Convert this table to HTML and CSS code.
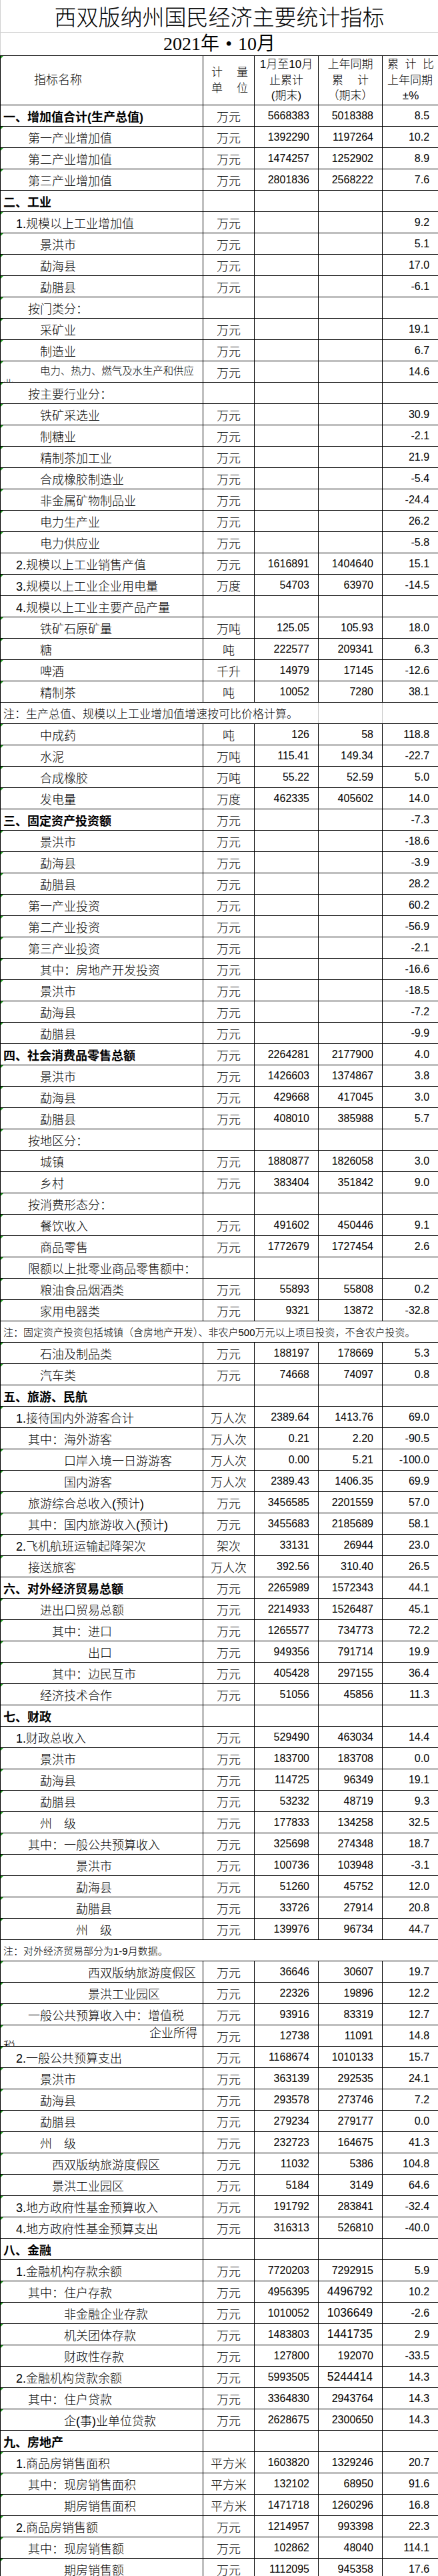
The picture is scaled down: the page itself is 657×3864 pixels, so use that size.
FILE: index.html
```html
<!DOCTYPE html>
<html lang="zh-CN">
<head>
<meta charset="utf-8">
<title>西双版纳州国民经济主要统计指标</title>
<link rel="stylesheet" href="styles.css">
</head>
<body>
<table class="sheet">
<colgroup><col class="c1"><col class="c2"><col class="c3"><col class="c4"><col class="c5"></colgroup>
<tbody>
<tr class="t1"><td class="title" colspan="5">西双版纳州国民经济主要统计指标</td></tr>
<tr class="t2"><td class="sub" colspan="5">2021年<span class="dot">•</span>10月</td></tr>
<tr class="hd">
<td class="n g h1">指标名称</td>
<td class="h2"><div class="sp2"><span>计</span><span>量</span></div><div class="sp2"><span>单</span><span>位</span></div></td>
<td class="h3"><div>1月至10月</div><div>止累计</div><div>(期末)</div></td>
<td class="h3"><div>上年同期</div><div class="sp4"><span>累</span><span>计</span></div><div>（期末）</div></td>
<td class="h5"><div class="sp5"><span>累</span><span>计</span><span>比</span></div><div>上年同期</div><div class="pm">±%</div></td>
</tr>

<tr><td class="n b">一、增加值合计(生产总值)</td><td class="u">万元</td><td class="v">5668383</td><td class="v">5018388</td><td class="v">8.5</td></tr>
<tr><td class="n g i2">第一产业增加值</td><td class="u">万元</td><td class="v">1392290</td><td class="v">1197264</td><td class="v">10.2</td></tr>
<tr><td class="n g i2">第二产业增加值</td><td class="u">万元</td><td class="v">1474257</td><td class="v">1252902</td><td class="v">8.9</td></tr>
<tr><td class="n g i2">第三产业增加值</td><td class="u">万元</td><td class="v">2801836</td><td class="v">2568222</td><td class="v">7.6</td></tr>
<tr><td class="n b">二、工业</td><td class="u"></td><td class="v"></td><td class="v"></td><td class="v"></td></tr>
<tr><td class="n g i1">1.规模以上工业增加值</td><td class="u">万元</td><td class="v"></td><td class="v"></td><td class="v">9.2</td></tr>
<tr><td class="n g i3">景洪市</td><td class="u">万元</td><td class="v"></td><td class="v"></td><td class="v">5.1</td></tr>
<tr><td class="n g i3">勐海县</td><td class="u">万元</td><td class="v"></td><td class="v"></td><td class="v">17.0</td></tr>
<tr><td class="n g i3">勐腊县</td><td class="u">万元</td><td class="v"></td><td class="v"></td><td class="v">-6.1</td></tr>
<tr><td class="n g i2">按门类分：</td><td class="u"></td><td class="v"></td><td class="v"></td><td class="v"></td></tr>
<tr><td class="n g i3">采矿业</td><td class="u">万元</td><td class="v"></td><td class="v"></td><td class="v">19.1</td></tr>
<tr><td class="n g i3">制造业</td><td class="u">万元</td><td class="v"></td><td class="v"></td><td class="v">6.7</td></tr>
<tr><td class="n g wrapc"><div class="wrap1">电力、热力、燃气及水生产和供应业</div></td><td class="u">万元</td><td class="v"></td><td class="v"></td><td class="v">14.6</td></tr>
<tr><td class="n g i2">按主要行业分：</td><td class="u"></td><td class="v"></td><td class="v"></td><td class="v"></td></tr>
<tr><td class="n g i3">铁矿采选业</td><td class="u">万元</td><td class="v"></td><td class="v"></td><td class="v">30.9</td></tr>
<tr><td class="n g i3">制糖业</td><td class="u">万元</td><td class="v"></td><td class="v"></td><td class="v">-2.1</td></tr>
<tr><td class="n g i3">精制茶加工业</td><td class="u">万元</td><td class="v"></td><td class="v"></td><td class="v">21.9</td></tr>
<tr><td class="n g i3">合成橡胶制造业</td><td class="u">万元</td><td class="v"></td><td class="v"></td><td class="v">-5.4</td></tr>
<tr><td class="n g i3">非金属矿物制品业</td><td class="u">万元</td><td class="v"></td><td class="v"></td><td class="v">-24.4</td></tr>
<tr><td class="n g i3">电力生产业</td><td class="u">万元</td><td class="v"></td><td class="v"></td><td class="v">26.2</td></tr>
<tr><td class="n g i3">电力供应业</td><td class="u">万元</td><td class="v"></td><td class="v"></td><td class="v">-5.8</td></tr>
<tr><td class="n i1">2.规模以上工业销售产值</td><td class="u">万元</td><td class="v">1616891</td><td class="v">1404640</td><td class="v">15.1</td></tr>
<tr><td class="n g i1">3.规模以上工业企业用电量</td><td class="u">万度</td><td class="v">54703</td><td class="v">63970</td><td class="v">-14.5</td></tr>
<tr><td class="n i1">4.规模以上工业主要产品产量</td><td class="u"></td><td class="v"></td><td class="v"></td><td class="v"></td></tr>
<tr><td class="n g i3">铁矿石原矿量</td><td class="u">万吨</td><td class="v">125.05</td><td class="v">105.93</td><td class="v">18.0</td></tr>
<tr><td class="n g i3">糖</td><td class="u">吨</td><td class="v">222577</td><td class="v">209341</td><td class="v">6.3</td></tr>
<tr><td class="n g i3">啤酒</td><td class="u">千升</td><td class="v">14979</td><td class="v">17145</td><td class="v">-12.6</td></tr>
<tr><td class="n g i3">精制茶</td><td class="u">吨</td><td class="v">10052</td><td class="v">7280</td><td class="v">38.1</td></tr>
<tr><td class="note note1" colspan="3">注：生产总值、规模以上工业增加值增速按可比价格计算。</td><td class="lg"></td><td class="lgl"></td></tr>
<tr><td class="n g i3">中成药</td><td class="u">吨</td><td class="v">126</td><td class="v">58</td><td class="v">118.8</td></tr>
<tr><td class="n g i3">水泥</td><td class="u">万吨</td><td class="v">115.41</td><td class="v">149.34</td><td class="v">-22.7</td></tr>
<tr><td class="n g i3">合成橡胶</td><td class="u">万吨</td><td class="v">55.22</td><td class="v">52.59</td><td class="v">5.0</td></tr>
<tr><td class="n g i3">发电量</td><td class="u">万度</td><td class="v">462335</td><td class="v">405602</td><td class="v">14.0</td></tr>
<tr><td class="n b">三、固定资产投资额</td><td class="u">万元</td><td class="v"></td><td class="v"></td><td class="v">-7.3</td></tr>
<tr><td class="n g i3">景洪市</td><td class="u">万元</td><td class="v"></td><td class="v"></td><td class="v">-18.6</td></tr>
<tr><td class="n g i3">勐海县</td><td class="u">万元</td><td class="v"></td><td class="v"></td><td class="v">-3.9</td></tr>
<tr><td class="n g i3">勐腊县</td><td class="u">万元</td><td class="v"></td><td class="v"></td><td class="v">28.2</td></tr>
<tr><td class="n g i2">第一产业投资</td><td class="u">万元</td><td class="v"></td><td class="v"></td><td class="v">60.2</td></tr>
<tr><td class="n g i2">第二产业投资</td><td class="u">万元</td><td class="v"></td><td class="v"></td><td class="v">-56.9</td></tr>
<tr><td class="n g i2">第三产业投资</td><td class="u">万元</td><td class="v"></td><td class="v"></td><td class="v">-2.1</td></tr>
<tr><td class="n g i3">其中：房地产开发投资</td><td class="u">万元</td><td class="v"></td><td class="v"></td><td class="v">-16.6</td></tr>
<tr><td class="n g i3">景洪市</td><td class="u">万元</td><td class="v"></td><td class="v"></td><td class="v">-18.5</td></tr>
<tr><td class="n g i3">勐海县</td><td class="u">万元</td><td class="v"></td><td class="v"></td><td class="v">-7.2</td></tr>
<tr><td class="n g i3">勐腊县</td><td class="u">万元</td><td class="v"></td><td class="v"></td><td class="v">-9.9</td></tr>
<tr><td class="n b">四、社会消费品零售总额</td><td class="u">万元</td><td class="v">2264281</td><td class="v">2177900</td><td class="v">4.0</td></tr>
<tr><td class="n g i3">景洪市</td><td class="u">万元</td><td class="v">1426603</td><td class="v">1374867</td><td class="v">3.8</td></tr>
<tr><td class="n g i3">勐海县</td><td class="u">万元</td><td class="v">429668</td><td class="v">417045</td><td class="v">3.0</td></tr>
<tr><td class="n g i3">勐腊县</td><td class="u">万元</td><td class="v">408010</td><td class="v">385988</td><td class="v">5.7</td></tr>
<tr><td class="n g i2">按地区分：</td><td class="u"></td><td class="v"></td><td class="v"></td><td class="v"></td></tr>
<tr><td class="n i3">城镇</td><td class="u">万元</td><td class="v">1880877</td><td class="v">1826058</td><td class="v">3.0</td></tr>
<tr><td class="n i3">乡村</td><td class="u">万元</td><td class="v">383404</td><td class="v">351842</td><td class="v">9.0</td></tr>
<tr><td class="n g i2">按消费形态分：</td><td class="u"></td><td class="v"></td><td class="v"></td><td class="v"></td></tr>
<tr><td class="n g i3">餐饮收入</td><td class="u">万元</td><td class="v">491602</td><td class="v">450446</td><td class="v">9.1</td></tr>
<tr><td class="n g i3">商品零售</td><td class="u">万元</td><td class="v">1772679</td><td class="v">1727454</td><td class="v">2.6</td></tr>
<tr><td class="n g i2">限额以上批零业商品零售额中：</td><td class="u"></td><td class="v"></td><td class="v"></td><td class="v"></td></tr>
<tr><td class="n g i3">粮油食品烟酒类</td><td class="u">万元</td><td class="v">55893</td><td class="v">55808</td><td class="v">0.2</td></tr>
<tr><td class="n g i3">家用电器类</td><td class="u">万元</td><td class="v">9321</td><td class="v">13872</td><td class="v">-32.8</td></tr>
<tr><td class="note note2" colspan="5">注：固定资产投资包括城镇（含房地产开发）、非农户500万元以上项目投资，不含农户投资。</td></tr>
<tr><td class="n g i3">石油及制品类</td><td class="u">万元</td><td class="v">188197</td><td class="v">178669</td><td class="v">5.3</td></tr>
<tr><td class="n g i3">汽车类</td><td class="u">万元</td><td class="v">74668</td><td class="v">74097</td><td class="v">0.8</td></tr>
<tr><td class="n b">五、旅游、民航</td><td class="u"></td><td class="v"></td><td class="v"></td><td class="v"></td></tr>
<tr><td class="n g i1">1.接待国内外游客合计</td><td class="u">万人次</td><td class="v">2389.64</td><td class="v">1413.76</td><td class="v">69.0</td></tr>
<tr><td class="n i2">其中：海外游客</td><td class="u">万人次</td><td class="v">0.21</td><td class="v">2.20</td><td class="v">-90.5</td></tr>
<tr><td class="n g i5">口岸入境一日游游客</td><td class="u">万人次</td><td class="v">0.00</td><td class="v">5.21</td><td class="v">-100.0</td></tr>
<tr><td class="n g i5">国内游客</td><td class="u">万人次</td><td class="v">2389.43</td><td class="v">1406.35</td><td class="v">69.9</td></tr>
<tr><td class="n g i2">旅游综合总收入(预计)</td><td class="u">万元</td><td class="v">3456585</td><td class="v">2201559</td><td class="v">57.0</td></tr>
<tr><td class="n g i2">其中：国内旅游收入(预计)</td><td class="u">万元</td><td class="v">3455683</td><td class="v">2185689</td><td class="v">58.1</td></tr>
<tr><td class="n g i1">2.飞机航班运输起降架次</td><td class="u">架次</td><td class="v">33131</td><td class="v">26944</td><td class="v">23.0</td></tr>
<tr><td class="n g i2">接送旅客</td><td class="u">万人次</td><td class="v">392.56</td><td class="v">310.40</td><td class="v">26.5</td></tr>
<tr><td class="n b">六、对外经济贸易总额</td><td class="u">万元</td><td class="v">2265989</td><td class="v">1572343</td><td class="v">44.1</td></tr>
<tr><td class="n g i3">进出口贸易总额</td><td class="u">万元</td><td class="v">2214933</td><td class="v">1526487</td><td class="v">45.1</td></tr>
<tr><td class="n g i4">其中：进口</td><td class="u">万元</td><td class="v">1265577</td><td class="v">734773</td><td class="v">72.2</td></tr>
<tr><td class="n g i7">出口</td><td class="u">万元</td><td class="v">949356</td><td class="v">791714</td><td class="v">19.9</td></tr>
<tr><td class="n g i4">其中：边民互市</td><td class="u">万元</td><td class="v">405428</td><td class="v">297155</td><td class="v">36.4</td></tr>
<tr><td class="n g i3">经济技术合作</td><td class="u">万元</td><td class="v">51056</td><td class="v">45856</td><td class="v">11.3</td></tr>
<tr><td class="n b">七、财政</td><td class="u"></td><td class="v"></td><td class="v"></td><td class="v"></td></tr>
<tr><td class="n i1">1.财政总收入</td><td class="u">万元</td><td class="v">529490</td><td class="v">463034</td><td class="v">14.4</td></tr>
<tr><td class="n g i3">景洪市</td><td class="u">万元</td><td class="v">183700</td><td class="v">183708</td><td class="v">0.0</td></tr>
<tr><td class="n g i3">勐海县</td><td class="u">万元</td><td class="v">114725</td><td class="v">96349</td><td class="v">19.1</td></tr>
<tr><td class="n g i3">勐腊县</td><td class="u">万元</td><td class="v">53232</td><td class="v">48719</td><td class="v">9.3</td></tr>
<tr><td class="n g i3">州　级</td><td class="u">万元</td><td class="v">177833</td><td class="v">134258</td><td class="v">32.5</td></tr>
<tr><td class="n g i2">其中：一般公共预算收入</td><td class="u">万元</td><td class="v">325698</td><td class="v">274348</td><td class="v">18.7</td></tr>
<tr><td class="n g i6">景洪市</td><td class="u">万元</td><td class="v">100736</td><td class="v">103948</td><td class="v">-3.1</td></tr>
<tr><td class="n g i6">勐海县</td><td class="u">万元</td><td class="v">51260</td><td class="v">45752</td><td class="v">12.0</td></tr>
<tr><td class="n g i6">勐腊县</td><td class="u">万元</td><td class="v">33726</td><td class="v">27914</td><td class="v">20.8</td></tr>
<tr><td class="n g i6">州　级</td><td class="u">万元</td><td class="v">139976</td><td class="v">96734</td><td class="v">44.7</td></tr>
<tr><td class="note note3" colspan="5">注：对外经济贸易部分为1-9月数据。</td></tr>
<tr><td class="n g i7">西双版纳旅游度假区</td><td class="u">万元</td><td class="v">36646</td><td class="v">30607</td><td class="v">19.7</td></tr>
<tr><td class="n g i7">景洪工业园区</td><td class="u">万元</td><td class="v">22326</td><td class="v">19896</td><td class="v">12.2</td></tr>
<tr><td class="n g i2">一般公共预算收入中：增值税</td><td class="u">万元</td><td class="v">93916</td><td class="v">83319</td><td class="v">12.7</td></tr>
<tr><td class="n g wrapc"><div class="wrap2"><div class="r">企业所得</div><div>税</div></div></td><td class="u">万元</td><td class="v">12738</td><td class="v">11091</td><td class="v">14.8</td></tr>
<tr><td class="n g i1">2.一般公共预算支出</td><td class="u">万元</td><td class="v">1168674</td><td class="v">1010133</td><td class="v">15.7</td></tr>
<tr><td class="n g i3">景洪市</td><td class="u">万元</td><td class="v">363139</td><td class="v">292535</td><td class="v">24.1</td></tr>
<tr><td class="n g i3">勐海县</td><td class="u">万元</td><td class="v">293578</td><td class="v">273746</td><td class="v">7.2</td></tr>
<tr><td class="n g i3">勐腊县</td><td class="u">万元</td><td class="v">279234</td><td class="v">279177</td><td class="v">0.0</td></tr>
<tr><td class="n g i3">州　级</td><td class="u">万元</td><td class="v">232723</td><td class="v">164675</td><td class="v">41.3</td></tr>
<tr><td class="n g i4">西双版纳旅游度假区</td><td class="u">万元</td><td class="v">11032</td><td class="v">5386</td><td class="v">104.8</td></tr>
<tr><td class="n g i4">景洪工业园区</td><td class="u">万元</td><td class="v">5184</td><td class="v">3149</td><td class="v">64.6</td></tr>
<tr><td class="n g i1">3.地方政府性基金预算收入</td><td class="u">万元</td><td class="v">191792</td><td class="v">283841</td><td class="v">-32.4</td></tr>
<tr><td class="n g i1">4.地方政府性基金预算支出</td><td class="u">万元</td><td class="v">316313</td><td class="v">526810</td><td class="v">-40.0</td></tr>
<tr><td class="n b">八、金融</td><td class="u"></td><td class="v"></td><td class="v"></td><td class="v"></td></tr>
<tr><td class="n i1">1.金融机构存款余额</td><td class="u">万元</td><td class="v">7720203</td><td class="v">7292915</td><td class="v">5.9</td></tr>
<tr><td class="n g i2">其中：住户存款</td><td class="u">万元</td><td class="v">4956395</td><td class="v w">4496792</td><td class="v">10.2</td></tr>
<tr><td class="n g i5">非金融企业存款</td><td class="u">万元</td><td class="v">1010052</td><td class="v w">1036649</td><td class="v">-2.6</td></tr>
<tr><td class="n g i5">机关团体存款</td><td class="u">万元</td><td class="v">1483803</td><td class="v w">1441735</td><td class="v">2.9</td></tr>
<tr><td class="n g i5">财政性存款</td><td class="u">万元</td><td class="v">127800</td><td class="v">192070</td><td class="v">-33.5</td></tr>
<tr><td class="n i1">2.金融机构贷款余额</td><td class="u">万元</td><td class="v">5993505</td><td class="v w">5244414</td><td class="v">14.3</td></tr>
<tr><td class="n g i2">其中：住户贷款</td><td class="u">万元</td><td class="v">3364830</td><td class="v">2943764</td><td class="v">14.3</td></tr>
<tr><td class="n g i5">企(事)业单位贷款</td><td class="u">万元</td><td class="v">2628675</td><td class="v">2300650</td><td class="v">14.3</td></tr>
<tr><td class="n b">九、房地产</td><td class="u"></td><td class="v"></td><td class="v"></td><td class="v"></td></tr>
<tr><td class="n g i1">1.商品房销售面积</td><td class="u">平方米</td><td class="v">1603820</td><td class="v">1329246</td><td class="v">20.7</td></tr>
<tr><td class="n g i2">其中：现房销售面积</td><td class="u">平方米</td><td class="v">132102</td><td class="v">68950</td><td class="v">91.6</td></tr>
<tr><td class="n g i5">期房销售面积</td><td class="u">平方米</td><td class="v">1471718</td><td class="v">1260296</td><td class="v">16.8</td></tr>
<tr><td class="n g i1">2.商品房销售额</td><td class="u">万元</td><td class="v">1214957</td><td class="v">993398</td><td class="v">22.3</td></tr>
<tr><td class="n g i2">其中：现房销售额</td><td class="u">万元</td><td class="v">102862</td><td class="v">48040</td><td class="v">114.1</td></tr>
<tr><td class="n g i5">期房销售额</td><td class="u">万元</td><td class="v">1112095</td><td class="v">945358</td><td class="v">17.6</td></tr>
</tbody>
</table>
</body>
</html>
```

FILE: styles.css
```css
html, body {
  margin: 0;
  padding: 0;
  background: #ffffff;
  color: #000000;
}

body {
  font-family: "Liberation Sans", "Noto Sans CJK SC", sans-serif;
}

.sheet {
  width: 657px;
  border-collapse: collapse;
  table-layout: fixed;
}

.c1 { width: 304px; }
.c2 { width: 77px; }
.c3 { width: 96px; }
.c4 { width: 96px; }
.c5 { width: 84px; }

.sheet tr { height: 32px; }

.sheet td {
  padding: 0;
  border: 1px solid #000;
  white-space: nowrap;
  overflow: hidden;
  vertical-align: middle;
}

/* title rows */
.sheet tr.t1 { height: 43px; }
.sheet tr.t2 { height: 35px; }

.sheet td.title {
  border-top: none;
  border-left: 1px solid #d0d0d0;
  border-right: 1px solid #d0d0d0;
  border-bottom: 1px solid #d0d0d0;
  text-align: center;
  font-family: "Noto Sans CJK SC", sans-serif;
  font-size: 33px;
  font-weight: 300;
  letter-spacing: 0;
}

.sheet td.sub {
  border-left: 1px solid #d0d0d0;
  border-right: 1px solid #d0d0d0;
  border-top: 1px solid #d0d0d0;
  text-align: center;
  font-family: "Liberation Serif", "Noto Sans CJK SC", serif;
  font-size: 28px;
  line-height: 30px;
}

.dot {
  display: inline-block;
  width: 1em;
  text-align: center;
}

/* header */
.sheet tr.hd { height: 74px; }

.hd td {
  white-space: normal;
  font-family: "Liberation Sans", "Noto Sans CJK SC", sans-serif;
  font-size: 17px;
  font-weight: 300;
  line-height: 23.5px;
}

.hd td.h1 {
  padding-left: 50px;
  font-size: 18px;
}

.hd td.h2 {
  padding: 0 9px 0 12px;
}

.sp2 {
  display: flex;
  justify-content: space-between;
}

.hd td.h3 { text-align: center; }

.sp4 {
  display: flex;
  justify-content: center;
  gap: 21px;
}

.hd td.h5 { padding: 0 6px 0 7px; }

.sp5 {
  display: flex;
  justify-content: space-between;
}

.pm { text-align: center; }

/* body cells */
td.n {
  position: relative;
  font-size: 18px;
  font-weight: 300;
  text-align: left;
}

td.g::before {
  content: "";
  position: absolute;
  top: 0;
  left: 0;
  width: 0;
  height: 0;
  border-top: 4px solid #1f9b1f;
  border-right: 4px solid transparent;
}

td.b {
  padding-left: 4px;
  font-weight: 700;
}

td.i1 { padding-left: 23px; }
td.i2 { padding-left: 41px; }
td.i3 { padding-left: 59px; }
td.i4 { padding-left: 77px; }
td.i5 { padding-left: 95px; }
td.i6 { padding-left: 113px; }
td.i7 { padding-left: 131px; }

td.u {
  text-align: center;
  font-size: 18px;
  font-weight: 300;
}

td.v {
  text-align: right;
  padding-right: 13px;
  font-family: "Liberation Sans", sans-serif;
  font-size: 16px;
}

td.v.w { font-size: 17.5px; padding-right: 14px; }

/* wrapped first-column cells */
td.wrapc { vertical-align: top; }

.wrap1 {
  height: 31px;
  overflow: hidden;
  box-sizing: border-box;
  white-space: normal;
  padding: 5px 0 0 4px;
  text-indent: 55px;
  font-size: 15.4px;
  line-height: 20px;
}

.wrap2 {
  height: 31px;
  overflow: hidden;
  box-sizing: border-box;
  padding: 2px 0 0 4px;
  line-height: 20px;
}

.wrap2 .r {
  text-align: right;
  padding-right: 8px;
}

/* notes */
td.note {
  padding-left: 4px;
  font-weight: 300;
  text-align: left;
}

td.note1 {
  font-size: 17px;
  border-right-color: #c8c8c8;
}

td.lg { border-right-color: #c8c8c8; }

td.note2, td.note3 { font-size: 15px; }
```
